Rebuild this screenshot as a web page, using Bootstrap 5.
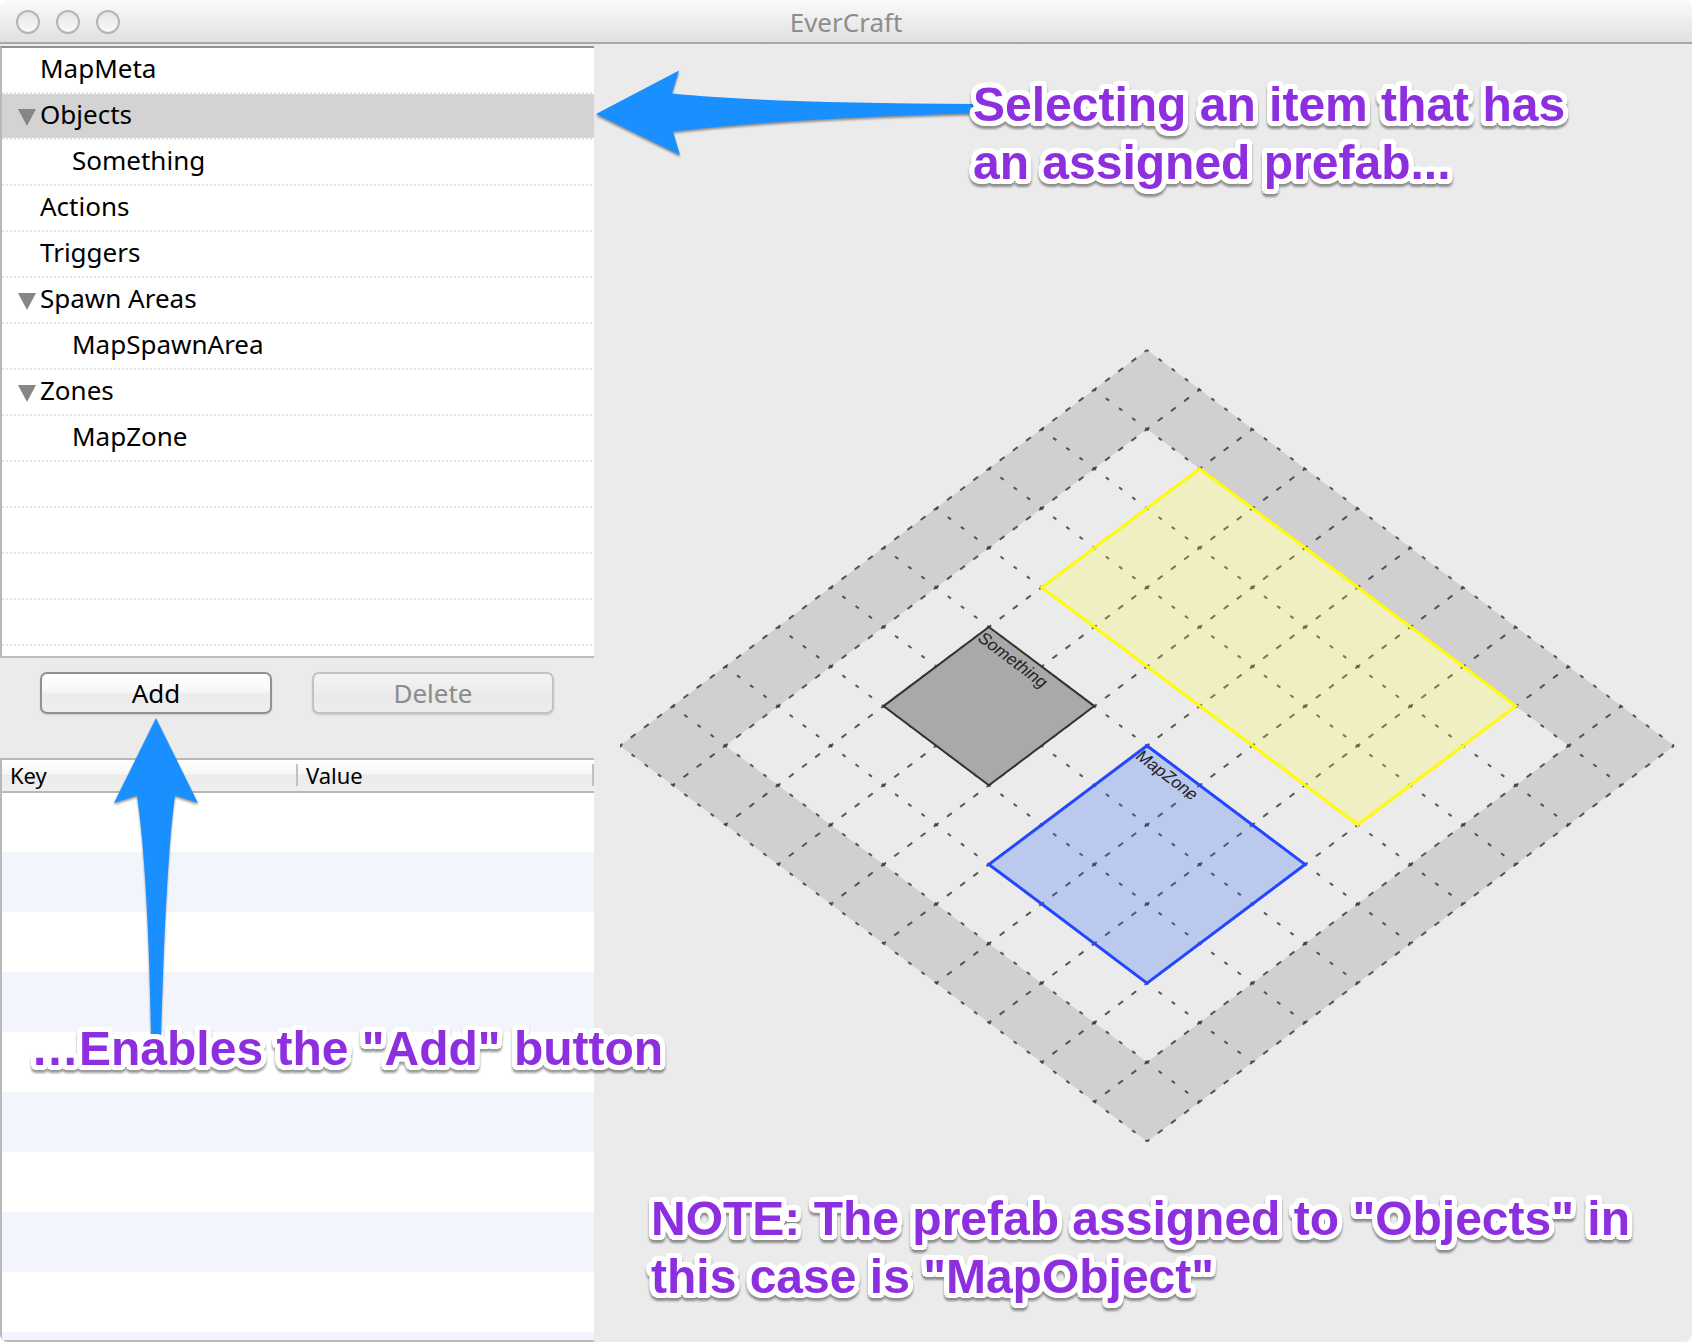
<!DOCTYPE html>
<html lang="en">
<head>
<meta charset="utf-8">
<meta name="viewport" content="width=device-width, initial-scale=1">
<title>EverCraft</title>
<link href="https://cdn.jsdelivr.net/npm/bootstrap@5.3.0/dist/css/bootstrap.min.css" rel="stylesheet">
<style>
  body { font-family: "Noto Sans", "Open Sans", sans-serif; font-size: 26px; line-height: 40px; color: #000; background: #fff; }
  .app-window { background: #ebebeb; border-radius: 10px 10px 8px 8px; overflow: hidden; }
  .titlebar { height: 44px; padding: 2px 16px 0; background: linear-gradient(#fbfbfb, #e0e0e0); border-bottom: 2px solid #a8a8a8; }
  .titlebar h1 { font-size: 26px; line-height: 40px; color: #8d8d8d; }
  .traffic { width: 104px; gap: 16px; }
  .traffic button { width: 24px; height: 24px; padding: 0; border: 2px solid #b4b4b4; border-radius: 50%; background: linear-gradient(#e6e6e6, #f8f8f8); }
  .sidebar { flex: 0 0 594px; padding-top: 2px; }
  .tree { min-height: 612px; border-top: 2px solid #929292; border-left: 2px solid #b8b8b8; border-bottom: 2px solid #bcbcbc; background: #fff; }
  .tree li { height: 46px; padding-left: 38px; position: relative;
    background: repeating-linear-gradient(90deg, #e6e6e6 0 2px, #fff 2px 4px) left bottom / 100% 2px no-repeat; }
  .tree li.nested { padding-left: 70px; }
  .tree li.picked { background-image: repeating-linear-gradient(90deg, #e6e6e6 0 2px, #fff 2px 4px), linear-gradient(#d3d3d3, #d3d3d3); background-size: 100% 2px, 100% 100%; }
  .tree svg { position: absolute; left: 16px; top: 15px; }
  .actions { padding: 14px 40px 44px; gap: 40px; }
  .actions .btn { height: 42px; padding: 0; font-size: 26px; line-height: 36px; color: #000; border: 2px solid #919191; border-radius: 7px; background: linear-gradient(#fff 0%, #f7f7f7 45%, #ebebeb 55%, #f0f0f0 100%); box-shadow: 0 1px 2px rgba(0,0,0,.15); }
  .actions .btn:disabled { opacity: 1; color: #8c8c8c; border-color: #c2c2c2; background: linear-gradient(#f5f5f5, #e9e9e9 60%, #eee); }
  .btn-add { width: 232px; }
  .btn-delete { width: 242px; }
  .props { border: solid #b8b8b8; border-width: 2px 0 2px 2px; background: repeating-linear-gradient(#fff 0 60px, #f2f5fb 60px 120px) 0 32px #fff; }
  .props table { font-size: 22px; line-height: 26px; }
  .props th { height: 32px; padding: 0 8px 2px; font-weight: 400; border-bottom: 2px solid #b8b8b8;
    background: linear-gradient(#c2c2c2, #c2c2c2) right 4px / 2px 22px no-repeat, linear-gradient(#fff 0, #f6f6f6 45%, #ebebeb 50%, #efefef 100%); }
  .callout { margin: 0; z-index: 1; font: bold 48px/58px "Liberation Sans", Arial, sans-serif; color: #8e2fdf; filter: drop-shadow(0 3px 1px rgba(0,0,0,.4));
    text-shadow: 5px 0 #fff, -5px 0 #fff, 0 5px #fff, 0 -5px #fff,
      4px 4px #fff, -4px 4px #fff, 4px -4px #fff, -4px -4px #fff,
      5px 2px #fff, -5px 2px #fff, 5px -2px #fff, -5px -2px #fff,
      2px 5px #fff, -2px 5px #fff, 2px -5px #fff, -2px -5px #fff,
      2px 2px #fff, -2px 2px #fff, 2px -2px #fff, -2px -2px #fff; }
  .canvas-pane { min-width: 0; padding: 32px 16px 36px 26px; }
  .callout-top { padding-left: 353px; }
  .callout-note { padding-left: 31px; }
  .map { width: 100%; display: block; margin: 157px 0 32px; }
  .map text { font: italic 17px "Liberation Sans", Arial, sans-serif; fill: #222; }
  .callout-add { position: absolute; left: 31px; top: 1020px; white-space: nowrap; }
  .arrow { position: absolute; filter: drop-shadow(0 2px 1px rgba(0,0,0,.4)); fill: #1a8fff; }
  .arrow-left { left: 595px; top: 66px; }
  .arrow-up { left: 110px; top: 716px; }
</style>
<script src="https://cdn.jsdelivr.net/npm/bootstrap@5.3.0/dist/js/bootstrap.bundle.min.js"></script>
</head>
<body>
<div class="app-window position-relative min-vh-100 d-flex flex-column">
  <header class="titlebar d-flex align-items-center">
    <div class="traffic d-flex">
      <button type="button" aria-label="Close"></button>
      <button type="button" aria-label="Minimize"></button>
      <button type="button" aria-label="Zoom"></button>
    </div>
    <h1 class="flex-grow-1 text-center m-0 fw-normal">EverCraft</h1>
    <div class="traffic"></div>
  </header>

  <div class="d-flex flex-grow-1">
    <aside class="sidebar d-flex flex-column">
      <ul class="tree list-unstyled m-0">
        <li>MapMeta</li>
        <li class="picked"><svg width="18" height="18" aria-hidden="true"><path d="M0 0H18L9 17Z" fill="#868686"/></svg>Objects</li>
        <li class="nested">Something</li>
        <li>Actions</li>
        <li>Triggers</li>
        <li><svg width="18" height="18" aria-hidden="true"><path d="M0 0H18L9 17Z" fill="#868686"/></svg>Spawn Areas</li>
        <li class="nested">MapSpawnArea</li>
        <li><svg width="18" height="18" aria-hidden="true"><path d="M0 0H18L9 17Z" fill="#868686"/></svg>Zones</li>
        <li class="nested">MapZone</li>
        <li></li><li></li><li></li><li></li>
      </ul>
      <div class="actions d-flex">
        <button type="button" class="btn btn-add">Add</button>
        <button type="button" class="btn btn-delete" disabled>Delete</button>
      </div>
      <div class="props flex-grow-1">
        <table class="w-100">
          <thead><tr><th scope="col" class="w-50">Key</th><th scope="col" class="w-50">Value</th></tr></thead>
        </table>
      </div>
    </aside>

    <main class="canvas-pane flex-grow-1 d-flex flex-column">
      <p class="callout callout-top position-relative">Selecting an item that has<br>an assigned prefab...</p>
      <svg class="map" viewBox="620 349 1056 794" role="img" aria-label="Isometric map">
        <path d="M1147 350 1674 745.7 1147 1141.4 620 745.7Z M1147 429.1 725.4 745.7 1147 1062.3 1568.6 745.7Z" fill="#d0d0d0" fill-rule="evenodd"/>
        <g id="grid" fill="none" stroke="#333" stroke-opacity=".8" stroke-width="2"></g>
        <path d="M1199.7 468.7 1515.9 706.1 1357.8 824.8 1041.6 587.4Z" fill="rgba(255,255,30,.2)" stroke="#fffb0a" stroke-width="3"/>
        <path d="M988.9 627 1094.3 706.1 988.9 785.3 883.5 706.1Z" fill="#a9a9a9" stroke="#333" stroke-width="2"/>
        <path d="M1147 745.7 1305.1 864.4 1147 983.1 988.9 864.4Z" fill="rgba(34,90,250,.24)" stroke="#2346ff" stroke-width="3"/>
        <text transform="translate(977 640) rotate(37)">Something</text>
        <text transform="translate(1135 758) rotate(37)">MapZone</text>
      </svg>
      <p class="callout callout-note position-relative mt-auto">NOTE: The prefab assigned to "Objects" in<br>this case is "MapObject"</p>
    </main>
  </div>

  <svg class="arrow arrow-left" width="380" height="94" viewBox="596 66 380 94" aria-hidden="true"><path d="M597 114 680 70.500 673 93.500Q765 103 974 104V113.500Q790 118 674 131.500L681 155Z"/></svg>
  <svg class="arrow arrow-up" width="92" height="322" viewBox="110 716 92 322" aria-hidden="true"><path d="M156 718 198 803 175 795.500Q166 860 161 1036H151Q148 870 137 795.500L114 803Z"/></svg>
  <p class="callout callout-add">…Enables the "Add" button</p>
</div>
<script>
  // Grid of 10 by 10 isometric tiles, with four dashes to a tile edge
  const DX = 52.7, DY = 39.57, N = 10, EDGE = Math.hypot(DX, DY) / 4;
  const at = (i, j) => `${1147 + (i - j) * DX} ${350 + (i + j) * DY}`;
  const grid = document.getElementById('grid');
  const line = (a, b, dash) => {
    const p = document.createElementNS('http://www.w3.org/2000/svg', 'path');
    p.setAttribute('d', `M${a}L${b}`);
    p.setAttribute('stroke-dasharray', `${dash} ${EDGE - dash}`);
    p.setAttribute('stroke-dashoffset', dash / 2);
    grid.append(p);
  };
  for (let k = 0; k <= N; k++) {
    line(at(0, k), at(N, k), 4);
    line(at(k, 0), at(k, N), 6);
  }
</script>
</body>
</html>
